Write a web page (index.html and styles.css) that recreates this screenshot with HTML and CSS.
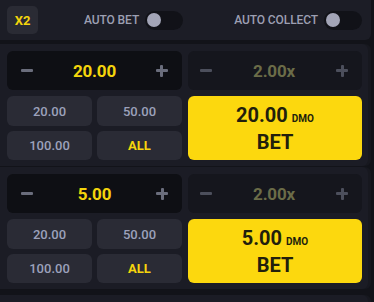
FILE: index.html
```html
<!DOCTYPE html>
<html>
<head>
<meta charset="utf-8">
<link rel="stylesheet" href="styles.css">
</head>
<body>
<div class="app">
  <div class="topbar">
    <div class="badge">X2</div>
    <div class="auto auto-bet">
      <span class="auto-label">AUTO BET</span>
      <span class="toggle"><span class="knob"></span></span>
    </div>
    <div class="auto auto-collect">
      <span class="auto-label">AUTO COLLECT</span>
      <span class="toggle"><span class="knob"></span></span>
    </div>
  </div>

  <div class="panel">
    <div class="col">
      <div class="stepper">
        <span class="minus"></span>
        <span class="value">20.00</span>
        <span class="plus"></span>
      </div>
      <div class="presets">
        <button class="preset">20.00</button>
        <button class="preset">50.00</button>
        <button class="preset">100.00</button>
        <button class="preset all">ALL</button>
      </div>
    </div>
    <div class="col">
      <div class="stepper mult">
        <span class="minus"></span>
        <span class="value">2.00x</span>
        <span class="plus"></span>
      </div>
      <button class="bet">
        <span class="amount">20.00<span class="cur">DMO</span></span>
        <span class="bet-label">BET</span>
      </button>
    </div>
  </div>

  <div class="panel">
    <div class="col">
      <div class="stepper">
        <span class="minus"></span>
        <span class="value">5.00</span>
        <span class="plus"></span>
      </div>
      <div class="presets">
        <button class="preset">20.00</button>
        <button class="preset">50.00</button>
        <button class="preset">100.00</button>
        <button class="preset all">ALL</button>
      </div>
    </div>
    <div class="col">
      <div class="stepper mult">
        <span class="minus"></span>
        <span class="value">2.00x</span>
        <span class="plus"></span>
      </div>
      <button class="bet">
        <span class="amount">5.00<span class="cur">DMO</span></span>
        <span class="bet-label">BET</span>
      </button>
    </div>
  </div>

  <div class="panel panel-peek"></div>
</div>
</body>
</html>
```

FILE: styles.css
```css
* { box-sizing: border-box; }
html, body {
  margin: 0;
  padding: 0;
  background: #121319;
  font-family: Roboto, "Liberation Sans", sans-serif;
  overflow: hidden;
}
.app {
  width: 371px;
  display: flex;
  flex-direction: column;
}
.topbar {
  height: 40px;
  background: #1c1d26;
  border-radius: 0 0 6px 0;
  display: flex;
  align-items: center;
  padding: 0 9px 0 7px;
  margin-bottom: 4px;
}
.badge {
  width: 31px;
  height: 28px;
  border-radius: 5px;
  background: #2a2b34;
  color: #f4d50c;
  font-weight: 700;
  font-size: 13px;
  display: flex;
  align-items: center;
  justify-content: center;
}
.auto {
  display: flex;
  align-items: center;
  gap: 6px;
}
.auto-bet { margin-left: 46px; }
.auto-collect { margin-left: auto; }
.auto-label {
  color: #9c9fb2;
  font-size: 12px;
  font-weight: 500;
  letter-spacing: -0.1px;
}
.toggle {
  width: 38px;
  height: 19px;
  border-radius: 10px;
  background: #111218;
  display: flex;
  align-items: center;
  padding-left: 2px;
}
.knob {
  width: 14px;
  height: 14px;
  border-radius: 50%;
  background: #a3a5b7;
}
.panel {
  width: 368px;
  background: #1b1c25;
  border-radius: 0 6px 6px 0;
  padding: 7px 6px 6px 7px;
  display: grid;
  grid-template-columns: 175px 174px;
  column-gap: 6px;
  margin-bottom: 1px;
  box-shadow: 3px 0 0 #17181f;
}
.panel-peek {
  margin-top: 5px;
  height: 20px;
}
.col {
  display: flex;
  flex-direction: column;
  gap: 6px;
}
.stepper {
  height: 39px;
  border-radius: 6px;
  background: #0e0f14;
  display: flex;
  align-items: center;
  justify-content: space-between;
  padding: 0 14px 0 14px;
}
.stepper.mult { background: #15161d; padding: 0 14px 0 12px; }
.value {
  color: #f4d50c;
  font-weight: 700;
  font-size: 17px;
  letter-spacing: -0.2px;
}
.mult .value { color: #6b6c48; }
.minus {
  width: 12px;
  height: 3px;
  background: #6a6d7c;
  border-radius: 1px;
}
.mult .minus { background: #4c4f5c; }
.plus {
  width: 12px;
  height: 12px;
  position: relative;
}
.plus::before, .plus::after {
  content: "";
  position: absolute;
  background: #6a6d7c;
  border-radius: 1px;
}
.mult .plus::before, .mult .plus::after { background: #4c4f5c; }
.plus::before { left: 0; top: 4.5px; width: 12px; height: 3px; }
.plus::after { left: 4.5px; top: 0; width: 3px; height: 12px; }
.presets {
  display: grid;
  grid-template-columns: 85px 85px;
  grid-template-rows: 30px 29px;
  gap: 5px;
}
.preset {
  border: 0;
  margin: 0;
  padding: 0;
  border-radius: 6px;
  background: #2a2b35;
  color: #9ca1bb;
  font-family: inherit;
  font-size: 13px;
  font-weight: 500;
}
.preset.all { color: #f4d50c; font-weight: 700; }
.bet {
  height: 64px;
  border: 0;
  margin: 0;
  padding: 0;
  border-radius: 6px;
  background: #fcd80e;
  color: #221f0c;
  font-family: inherit;
  display: flex;
  flex-direction: column;
  align-items: center;
  justify-content: center;
  gap: 1px;
}
.amount {
  font-size: 20px;
  font-weight: 700;
  line-height: 22px;
  display: flex;
  align-items: baseline;
}
.cur {
  font-size: 10px;
  margin-left: 4px;
}
.bet-label {
  font-size: 20px;
  font-weight: 700;
  line-height: 22px;
}
```
